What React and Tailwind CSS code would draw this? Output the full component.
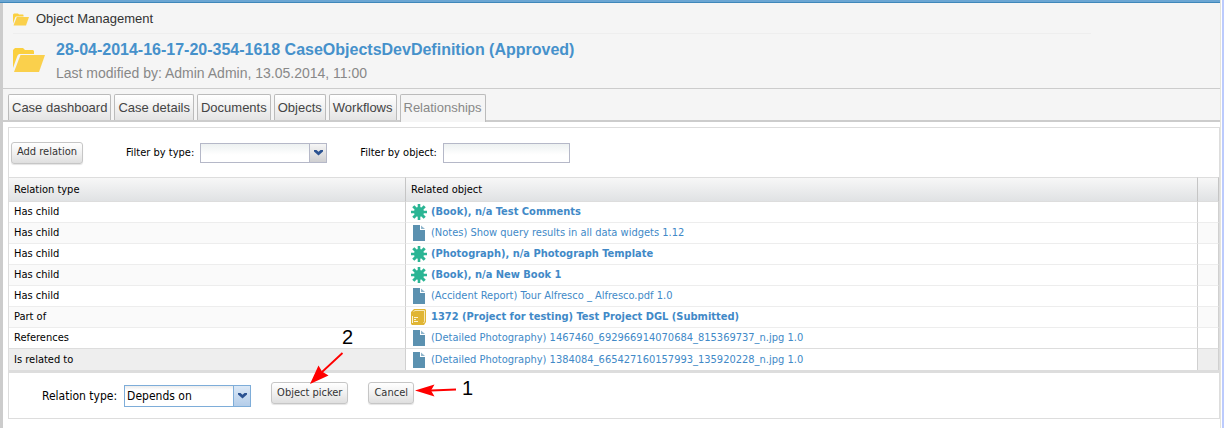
import { useState } from 'react';

const TABS = ['Case dashboard', 'Case details', 'Documents', 'Objects', 'Workflows', 'Relationships'];

const ROWS = [
  { type: 'Has child', icon: 'star', label: '(Book), n/a Test Comments' },
  { type: 'Has child', icon: 'file', label: '(Notes) Show query results in all data widgets 1.12' },
  { type: 'Has child', icon: 'star', label: '(Photograph), n/a Photograph Template' },
  { type: 'Has child', icon: 'star', label: '(Book), n/a New Book 1' },
  { type: 'Has child', icon: 'file', label: '(Accident Report) Tour Alfresco _ Alfresco.pdf 1.0' },
  { type: 'Part of', icon: 'book', label: '1372 (Project for testing) Test Project DGL (Submitted)' },
  { type: 'References', icon: 'file', label: '(Detailed Photography) 1467460_692966914070684_815369737_n.jpg 1.0' },
  { type: 'Is related to', icon: 'file', label: '(Detailed Photography) 1384084_665427160157993_135920228_n.jpg 1.0' },
];

function FolderIcon({ className }) {
  return (
    <svg viewBox="0 0 32 24" className={className} aria-hidden="true">
      <path d="M0 20V2L2 0h8l2 2h8l1 1v3H6L4.500 7.500z" fill="#fbd03f" />
      <path d="M7.500 7H32l-6 17H1z" fill="#fad04c" />
    </svg>
  );
}

function RowIcon({ kind }) {
  if (kind === 'star') {
    return (
      <svg viewBox="0 0 16 16" className="size-4 shrink-0" aria-hidden="true">
        <g stroke="#2bb594" strokeWidth="3">
          <path d="M8 0v16M0 8h16" strokeWidth="2.600" />
          <path d="M2.300 2.300l11.400 11.400M13.700 2.300L2.300 13.700" />
        </g>
        <circle cx="8" cy="8" r="5" fill="#2bb594" />
      </svg>
    );
  }
  if (kind === 'book') {
    return (
      <svg viewBox="0 0 16 16" className="size-4 shrink-0" aria-hidden="true">
        <path d="M3 0h11l1 1v12l-2 3H1l-1-1V3z" fill="#e0b534" />
        <path d="M2.500 2.500L4 1.500h9.500v11l-1 1.500" fill="none" stroke="#f8e9b4" strokeWidth="1" />
        <path d="M1.500 7v7M3 8.500h4M3 10.500h2M3 12.500h4" fill="none" stroke="#fbf3d6" strokeWidth="1" />
      </svg>
    );
  }
  return (
    <svg viewBox="0 0 16 16" className="size-4 shrink-0" aria-hidden="true">
      <path d="M2 0h7v5h5v11H2z" fill="#5b91b0" />
      <path d="M10 0.500l4 3.500h-4z" fill="#8fb5cb" />
    </svg>
  );
}

function Combo({ id, options, active }) {
  return (
    <div className={active ? 'relative flex h-[22px] w-[127px] border border-[#7eadd9]' : 'relative flex h-5 w-[127px] border border-[#b5b8c8]'}>
      <select
        id={id}
        className={
          active
            ? 'w-full appearance-none bg-white bg-linear-to-b from-[#ececec] to-white to-20% pl-[2px] pr-4 text-[12px] leading-[20px] outline-none'
            : 'w-full appearance-none bg-linear-to-b from-[#edf1f1] to-white to-60% pl-[2px] pr-4 text-[12px] outline-none'
        }
      >
        {options.map((o) => (
          <option key={o}>{o}</option>
        ))}
      </select>
      <span
        className={
          active
            ? 'pointer-events-none absolute inset-y-0 right-0 flex w-[17px] items-center justify-center border-l border-[#7eadd9] bg-linear-to-b from-[#dbe8f6] to-[#b4cde9]'
            : 'pointer-events-none absolute inset-y-0 right-0 flex w-[17px] items-center justify-center border-l border-[#b5b8c8] bg-linear-to-b from-[#f6f6f6] to-[#cfcfd1]'
        }
      >
        <svg viewBox="0 0 9 6" className="h-[6px] w-[9px]" aria-hidden="true">
          <path d="M0 0h2.500l2 1.800L6.500 0H9v1.500L4.500 5.500 0 1.500z" fill="#2b5291" />
        </svg>
      </span>
    </div>
  );
}

function Button({ children }) {
  return (
    <button
      type="button"
      className="h-[22px] rounded-[3px] border border-[#c6c6c6] bg-linear-to-b from-white via-[#f1f1f1] to-[#dfdfdf] px-[5px] text-[#333] shadow-[0_1px_1px_#e4e4e4]"
    >
      {children}
    </button>
  );
}

export default function App() {
  const [filter, setFilter] = useState('');
  return (
    <div className="flex min-h-screen border-r-2 border-[#bccbfd] bg-white font-['DejaVu_Sans_Condensed','DejaVu_Sans',sans-serif] text-[11px] text-black">
      <div className="mr-px flex min-w-0 grow flex-col border-r border-[#e4e4dc]">
        <div className="h-[3px] shrink-0 border-b border-[#3f87ba] bg-[#6ba6d3]" />
        <div className="flex grow flex-col border-l-[3px] border-[#ccc]">
          <header className="bg-[#f5f5f5] font-['Liberation_Sans',Arial,sans-serif]">
            <div className="border-b border-[#ccc] pl-[10px]">
              <div className="mr-[129px] flex h-[31px] items-center gap-[7px] border-b border-[#eee] text-[13px] text-[#333]">
                <FolderIcon className="mt-[2px] h-[13px] w-4" />
                <span className="pt-px">Object Management</span>
              </div>
              <div className="flex h-[54px] gap-[11px]">
                <FolderIcon className="mt-[14px] h-6 w-8" />
                <div className="pt-[4px]">
                  <h1 className="text-[16px] leading-6 font-bold text-[#4691cb]">
                    28-04-2014-16-17-20-354-1618 CaseObjectsDevDefinition (Approved)
                  </h1>
                  <p className="text-[14px] leading-[22px] text-[#888]">Last modified by: Admin Admin, 13.05.2014, 11:00</p>
                </div>
              </div>
            </div>
            <nav className="flex gap-[3px] border-b-2 border-[#ccc] pt-[5px] pl-[5px]">
              {TABS.map((t) => (
                <button
                  key={t}
                  type="button"
                  className={
                    t === 'Relationships'
                      ? '-mb-[2px] h-7 rounded-t-[2px] border border-b-0 border-[#bbb] bg-[#f5f5f5] px-[3px] pb-[2px] text-[13px] text-[#888]'
                      : 'h-[26px] rounded-t-[2px] border border-b-0 border-[#bbb] bg-linear-to-b from-white to-[#e4e4e4] px-[3px] text-[13px] text-[#444]'
                  }
                >
                  {t}
                </button>
              ))}
            </nav>
          </header>

          <main className="mt-[5px] ml-[5px] border border-[#ddd]">
            <div className="flex h-[49px] items-center pl-[2px]">
              <Button>Add relation</Button>
              <div className="ml-[43px] flex items-center gap-[6px]">
                <label htmlFor="type-filter" className="pt-px">
                  Filter by type:
                </label>
                <Combo id="type-filter" options={['']} />
              </div>
              <div className="ml-[33px] flex items-center gap-[6px]">
                <label htmlFor="object-filter" className="pt-px">
                  Filter by object:
                </label>
                <input
                  id="object-filter"
                  type="text"
                  value={filter}
                  onChange={(e) => setFilter(e.target.value)}
                  className="h-5 w-[127px] border border-[#b5b8c8] bg-linear-to-b from-[#edf1f1] to-white to-60% px-1 outline-none"
                />
              </div>
            </div>

            <table className="w-full table-fixed border-separate border-spacing-0">
              <colgroup>
                <col className="w-[397px]" />
                <col />
                <col className="w-[21px]" />
              </colgroup>
              <thead>
                <tr className="h-[25px] bg-linear-to-b from-[#f8f8f8] to-[#dfe1e3] text-left">
                  <th className="border-y border-r border-y-[#ddd] border-r-[#c5c5c5] px-[5px] pt-px font-normal">Relation type</th>
                  <th className="border-y border-r border-y-[#ddd] border-r-[#c5c5c5] px-[5px] pt-px font-normal">Related object</th>
                  <th className="border-y border-r border-y-[#ddd] border-r-[#c5c5c5] p-0" />
                </tr>
              </thead>
              <tbody>
                {ROWS.map((r, i) => {
                  const last = i === ROWS.length - 1;
                  const shade = last ? 'bg-[#eee]' : i % 2 ? 'bg-[#fafafa]' : 'bg-white';
                  const line = last ? 'border-b-0' : i === ROWS.length - 2 ? 'border-b border-b-[#ddd]' : 'border-b border-b-[#ededed]';
                  return (
                    <tr key={r.label} className="h-[21px]">
                      <td className={`border-r border-r-[#d0d0d0] px-[5px] pt-px pb-0 ${shade} ${line}`}>{r.type}</td>
                      <td className={`border-r border-r-[#d0d0d0] bg-white px-[5px] py-0 ${line}`}>
                        <a
                          href="#object"
                          className={`flex h-[20px] items-center gap-1 whitespace-nowrap text-[#4189c7] ${r.icon === 'file' ? '' : 'font-bold'}`}
                        >
                          <RowIcon kind={r.icon} />
                          <span className="pt-px">{r.label}</span>
                        </a>
                      </td>
                      <td className={`border-r border-r-[#d0d0d0] p-0 ${shade} ${line}`} />
                    </tr>
                  );
                })}
              </tbody>
            </table>

            <div className="relative flex h-[48px] items-start border-t-[3px] border-[#ddd] pl-[33px]">
              <label htmlFor="relation-type" className="mt-[12px] mr-[7px] text-[12px] leading-[22px]">
                Relation type:
              </label>
              <div className="mt-[12px]">
                <Combo id="relation-type" options={['Depends on', 'Has child', 'Part of', 'References']} active />
              </div>
              <div className="mt-[9px] ml-5 flex gap-5">
                <Button>Object picker</Button>
                <Button>Cancel</Button>
              </div>
              <div className="pointer-events-none absolute -top-[48px] left-[291px] h-[90px] w-[180px] font-['Liberation_Sans',Arial,sans-serif] text-[20px] leading-5">
                <svg viewBox="300 324 180 90" className="absolute inset-0 h-full w-full" aria-hidden="true">
                  <g stroke="#f00" strokeWidth="1.800" fill="#f00">
                    <path d="M342.500 352L322 371M456 388.500L431 389.500" />
                    <path stroke="none" d="M310 383L318.500 364.500 322 370.500 328.500 374.500zM415 389.500L434.500 383.500 431 389.500 434.500 395.500z" />
                  </g>
                </svg>
                <span className="absolute top-[2px] left-[42px]">2</span>
                <span className="absolute top-[53px] left-[162px]">1</span>
              </div>
            </div>
          </main>
        </div>
      </div>
    </div>
  );
}
